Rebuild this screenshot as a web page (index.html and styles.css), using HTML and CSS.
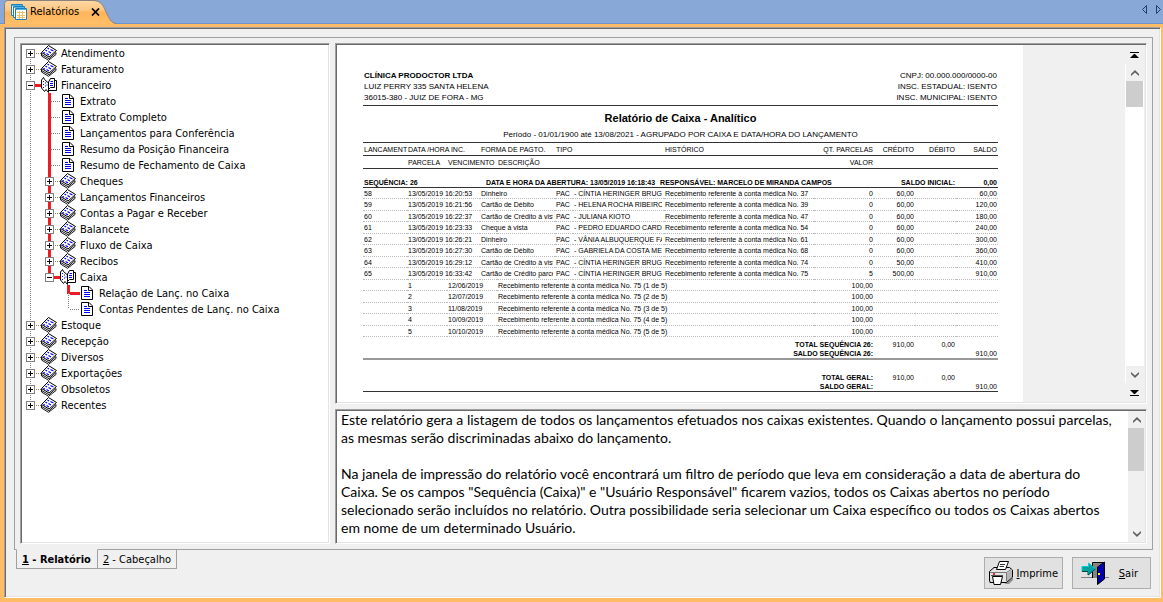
FILE: index.html
```html
<!DOCTYPE html>
<html lang="pt-BR">
<head>
<meta charset="utf-8">
<title>Relatórios</title>
<link rel="stylesheet" href="styles.css">
</head>
<body>
<svg class="defs" aria-hidden="true">
  <symbol id="i-book" viewBox="0 0 16 16">
    <path d="M0.500 8 7.500 0.500 15.500 5.500 14.500 10 7.500 15.500 0.500 11Z" fill="#fff"/>
    <path d="M0.500 7.500 7.500 0.500 15.500 5.500 8 12Z" fill="#fff" stroke="#000"/>
    <path d="M0.500 8V11L7.500 15.300 15 9.500V7.500L8 13.700 0.500 9.500" fill="none" stroke="#000" stroke-width=".9"/>
    <path d="M6.500 3 8 4M9.500 4.500 12.500 6M4.500 5 6 6M7.500 6.500 10 8M2.500 7.200 4 8.200M5.500 8.500 8 10" stroke="#00f" fill="none" stroke-width="1.200"/>
  </symbol>
  <symbol id="i-open" viewBox="0 0 16 16">
    <path d="M0.500 11V3L2.500 0.500 3.500 2.500 7.500 6V15.500L5 12.500 3.500 14.500Z" fill="#fff" stroke="#000"/>
    <path d="M7.500 5 9.500 1.500H13.500V10.500H9.500L7.500 12.500Z" fill="#fff" stroke="#000"/>
    <path d="M13.500 3.500H15.500V13.500H7.500" fill="none" stroke="#000"/>
    <path d="M2.500 4V5M4.500 5.500V6.500M2.500 7V8M4.500 8.500V9.500M6 7.500V8.500M2.500 10V11M9.500 4.500H12M9 6.500H12M9 8.500H12" stroke="#00f" fill="none"/>
  </symbol>
  <symbol id="i-page" viewBox="0 0 12 14">
    <path d="M0.500 0.500H8L11.500 4V13.500H0.500Z" fill="#fff" stroke="#000"/>
    <path d="M7.500 1V4.500H11" fill="none" stroke="#000"/>
    <path d="M3 4.500H6M3 6.500H9M3 8.500H9M3 10.500H9" stroke="#00f"/>
  </symbol>
  <symbol id="i-up" viewBox="0 0 8 6"><path d="M0 6V4L4 0 8 4V6L4 2.500Z" fill="#606060"/></symbol>
  <symbol id="i-down" viewBox="0 0 8 6"><path d="M0 0V2L4 6 8 2V0L4 3.500Z" fill="#606060"/></symbol>
</svg>

<header class="strip">
  <button class="doc-tab" type="button">
    <svg class="doc-shape" viewBox="0 0 112 24" width="112" height="24" aria-hidden="true">
      <defs><linearGradient id="g" x1="0" y1="0" x2="0" y2="1"><stop offset="0" stop-color="#ffd6a4"/><stop offset=".4" stop-color="#ffc681"/><stop offset=".5" stop-color="#ffb45a"/><stop offset="1" stop-color="#ffbf6b"/></linearGradient></defs>
      <path d="M0 24V5Q0 1 4 1H90C97 1 99 5 102 12 105 18 107 23 112 24Z" fill="url(#g)"/>
      <path d="M0.500 24V5Q0.500 0.500 4 0.500H90C97 1 99 5 102 12 105 18 107 23 112 23.500" fill="none" stroke="#8d8279"/>
    </svg>
    <svg class="doc-icon" width="16" height="16" viewBox="0 0 16 16" aria-hidden="true">
      <path d="M0.500 0.500H11.500V11.500H0.500Z" fill="#fff" stroke="#1b7fc0"/><path d="M1 1.500H11" stroke="#4fb4e8"/>
      <path d="M2.500 2.500H13.500V13.500H2.500Z" fill="#fff" stroke="#1b7fc0"/><path d="M3 3.500H13" stroke="#4fb4e8"/>
      <path d="M4.500 4.500H15.500V15.500H4.500Z" fill="#fff" stroke="#1b7fc0"/><path d="M5 5.500H15" stroke="#4fb4e8"/>
      <path d="M6 8.500H14M6 11.500H14M6 13.500H14" stroke="#e8c468"/><path d="M8.500 7V15M11.500 7V15" stroke="#e8c468"/>
    </svg>
    <span class="doc-name">Relatórios</span>
    <svg class="doc-close" width="9" height="8" viewBox="0 0 9 8" aria-hidden="true"><path d="M1 0.500 8 7.500M8 0.500 1 7.500" stroke="#000" stroke-width="1.700"/></svg>
  </button>
  <nav class="strip-nav">
    <button type="button" aria-label="Aba anterior"><svg width="5" height="9" viewBox="0 0 5 9"><path d="M4.500 0.500V8.500L0.500 4.500Z" fill="none" stroke="#1d3f6e"/></svg></button>
    <button type="button" aria-label="Próxima aba"><svg width="5" height="9" viewBox="0 0 5 9"><path d="M0.500 0.500V8.500L4.500 4.500Z" fill="none" stroke="#1d3f6e"/></svg></button>
  </nav>
</header>

<div class="window">
<main class="client">
  <section class="group">
    <div class="tree sunken">
      <ul>
        <li><div class="row"><button class="exp" type="button" aria-label="Expandir"></button><svg class="book"><use href="#i-book"/></svg><span>Atendimento</span></div></li>
        <li><div class="row"><button class="exp" type="button" aria-label="Expandir"></button><svg class="book"><use href="#i-book"/></svg><span>Faturamento</span></div></li>
        <li><div class="row hot"><button class="exp open" type="button" aria-label="Recolher"></button><svg class="book"><use href="#i-open"/></svg><span>Financeiro</span></div>
          <ul class="trail">
            <li><div class="row leaf"><svg class="page"><use href="#i-page"/></svg><span>Extrato</span></div></li>
            <li><div class="row leaf"><svg class="page"><use href="#i-page"/></svg><span>Extrato Completo</span></div></li>
            <li><div class="row leaf"><svg class="page"><use href="#i-page"/></svg><span>Lançamentos para Conferência</span></div></li>
            <li><div class="row leaf"><svg class="page"><use href="#i-page"/></svg><span>Resumo da Posição Financeira</span></div></li>
            <li><div class="row leaf"><svg class="page"><use href="#i-page"/></svg><span>Resumo de Fechamento de Caixa</span></div></li>
            <li><div class="row"><button class="exp" type="button" aria-label="Expandir"></button><svg class="book"><use href="#i-book"/></svg><span>Cheques</span></div></li>
            <li><div class="row"><button class="exp" type="button" aria-label="Expandir"></button><svg class="book"><use href="#i-book"/></svg><span>Lançamentos Financeiros</span></div></li>
            <li><div class="row"><button class="exp" type="button" aria-label="Expandir"></button><svg class="book"><use href="#i-book"/></svg><span>Contas a Pagar e Receber</span></div></li>
            <li><div class="row"><button class="exp" type="button" aria-label="Expandir"></button><svg class="book"><use href="#i-book"/></svg><span>Balancete</span></div></li>
            <li><div class="row"><button class="exp" type="button" aria-label="Expandir"></button><svg class="book"><use href="#i-book"/></svg><span>Fluxo de Caixa</span></div></li>
            <li><div class="row"><button class="exp" type="button" aria-label="Expandir"></button><svg class="book"><use href="#i-book"/></svg><span>Recibos</span></div></li>
            <li><div class="row hot"><button class="exp open" type="button" aria-label="Recolher"></button><svg class="book"><use href="#i-open"/></svg><span>Caixa</span></div>
              <ul>
                <li class="goal"><div class="row leaf hot"><svg class="page"><use href="#i-page"/></svg><span>Relação de Lanç. no Caixa</span></div></li>
                <li><div class="row leaf"><svg class="page"><use href="#i-page"/></svg><span>Contas Pendentes de Lanç. no Caixa</span></div></li>
              </ul>
            </li>
          </ul>
        </li>
        <li><div class="row"><button class="exp" type="button" aria-label="Expandir"></button><svg class="book"><use href="#i-book"/></svg><span>Estoque</span></div></li>
        <li><div class="row"><button class="exp" type="button" aria-label="Expandir"></button><svg class="book"><use href="#i-book"/></svg><span>Recepção</span></div></li>
        <li><div class="row"><button class="exp" type="button" aria-label="Expandir"></button><svg class="book"><use href="#i-book"/></svg><span>Diversos</span></div></li>
        <li><div class="row"><button class="exp" type="button" aria-label="Expandir"></button><svg class="book"><use href="#i-book"/></svg><span>Exportações</span></div></li>
        <li><div class="row"><button class="exp" type="button" aria-label="Expandir"></button><svg class="book"><use href="#i-book"/></svg><span>Obsoletos</span></div></li>
        <li><div class="row"><button class="exp" type="button" aria-label="Expandir"></button><svg class="book"><use href="#i-book"/></svg><span>Recentes</span></div></li>
      </ul>
    </div>

    <div class="preview sunken">
      <article class="sheet">
        <header class="sheet-head">
          <address><b>CLÍNICA PRODOCTOR LTDA</b><br>LUIZ PERRY 335 SANTA HELENA<br>36015-380 - JUIZ DE FORA - MG</address>
          <p>CNPJ: 00.000.000/0000-00<br>INSC. ESTADUAL: ISENTO<br>INSC. MUNICIPAL: ISENTO</p>
        </header>
        <h1>Relatório de Caixa - Analítico</h1>
        <p class="period">Período - 01/01/1900 até 13/08/2021 - AGRUPADO POR CAIXA E DATA/HORA DO LANÇAMENTO</p>
        <table>
          <colgroup><col class="c1"><col class="c2"><col class="c3"><col class="c4"><col class="c5"><col class="c6"><col class="c7"><col class="c8"><col class="c9"><col class="c10"><col class="c11"><col class="c12"></colgroup>
          <thead>
            <tr><th>LANCAMENT</th><th colspan="2">DATA /HORA INC.</th><th colspan="2">FORMA DE PAGTO.</th><th colspan="2">TIPO</th><th>HISTÓRICO</th><th class="n">QT. PARCELAS</th><th class="n">CRÉDITO</th><th class="n">DÉBITO</th><th class="n">SALDO</th></tr>
            <tr><th></th><th>PARCELA</th><th colspan="2">VENCIMENTO</th><th colspan="4">DESCRIÇÃO</th><th class="n">VALOR</th><th colspan="3"></th></tr>
          </thead>
          <tbody class="entries">
            <tr class="seq"><th colspan="3">SEQUÊNCIA: 26</th><th colspan="6" class="open-at"><span>DATA E HORA DA ABERTURA: 13/05/2019 16:18:43</span><span>RESPONSÁVEL: MARCELO DE MIRANDA CAMPOS</span></th><th colspan="2" class="n">SALDO INICIAL:</th><th class="n">0,00</th></tr>
            <tr><td>58</td><td colspan="2">13/05/2019 16:20:53</td><td colspan="2"><span>Dinheiro</span></td><td>PAC</td><td><span>- CÍNTIA HERINGER BRUG</span></td><td>Recebimento referente à conta médica No. 37</td><td class="n">0</td><td class="n">60,00</td><td></td><td class="n">60,00</td></tr>
            <tr><td>59</td><td colspan="2">13/05/2019 16:21:56</td><td colspan="2"><span>Cartão de Débito</span></td><td>PAC</td><td><span>- HELENA ROCHA RIBEIRO</span></td><td>Recebimento referente à conta médica No. 39</td><td class="n">0</td><td class="n">60,00</td><td></td><td class="n">120,00</td></tr>
            <tr><td>60</td><td colspan="2">13/05/2019 16:22:37</td><td colspan="2"><span>Cartão de Crédito à vista</span></td><td>PAC</td><td><span>- JULIANA KIOTO</span></td><td>Recebimento referente à conta médica No. 47</td><td class="n">0</td><td class="n">60,00</td><td></td><td class="n">180,00</td></tr>
            <tr><td>61</td><td colspan="2">13/05/2019 16:23:33</td><td colspan="2"><span>Cheque à vista</span></td><td>PAC</td><td><span>- PEDRO EDUARDO CARDO</span></td><td>Recebimento referente à conta médica No. 54</td><td class="n">0</td><td class="n">60,00</td><td></td><td class="n">240,00</td></tr>
            <tr><td>62</td><td colspan="2">13/05/2019 16:26:21</td><td colspan="2"><span>Dinheiro</span></td><td>PAC</td><td><span>- VÂNIA ALBUQUERQUE FA</span></td><td>Recebimento referente à conta médica No. 61</td><td class="n">0</td><td class="n">60,00</td><td></td><td class="n">300,00</td></tr>
            <tr><td>63</td><td colspan="2">13/05/2019 16:27:30</td><td colspan="2"><span>Cartão de Débito</span></td><td>PAC</td><td><span>- GABRIELA DA COSTA ME</span></td><td>Recebimento referente à conta médica No. 68</td><td class="n">0</td><td class="n">60,00</td><td></td><td class="n">360,00</td></tr>
            <tr><td>64</td><td colspan="2">13/05/2019 16:29:12</td><td colspan="2"><span>Cartão de Crédito à vista</span></td><td>PAC</td><td><span>- CÍNTIA HERINGER BRUG</span></td><td>Recebimento referente à conta médica No. 74</td><td class="n">0</td><td class="n">50,00</td><td></td><td class="n">410,00</td></tr>
            <tr><td>65</td><td colspan="2">13/05/2019 16:33:42</td><td colspan="2"><span>Cartão de Crédito parce</span></td><td>PAC</td><td><span>- CÍNTIA HERINGER BRUG</span></td><td>Recebimento referente à conta médica No. 75</td><td class="n">5</td><td class="n">500,00</td><td></td><td class="n">910,00</td></tr>
            <tr><td></td><td>1</td><td colspan="2">12/06/2019</td><td colspan="4">Recebimento referente à conta médica No. 75 (1 de 5)</td><td class="n">100,00</td><td colspan="3"></td></tr>
            <tr><td></td><td>2</td><td colspan="2">12/07/2019</td><td colspan="4">Recebimento referente à conta médica No. 75 (2 de 5)</td><td class="n">100,00</td><td colspan="3"></td></tr>
            <tr><td></td><td>3</td><td colspan="2">11/08/2019</td><td colspan="4">Recebimento referente à conta médica No. 75 (3 de 5)</td><td class="n">100,00</td><td colspan="3"></td></tr>
            <tr><td></td><td>4</td><td colspan="2">10/09/2019</td><td colspan="4">Recebimento referente à conta médica No. 75 (4 de 5)</td><td class="n">100,00</td><td colspan="3"></td></tr>
            <tr><td></td><td>5</td><td colspan="2">10/10/2019</td><td colspan="4">Recebimento referente à conta médica No. 75 (5 de 5)</td><td class="n">100,00</td><td colspan="3"></td></tr>
          </tbody>
          <tbody class="total">
            <tr><th colspan="9" class="n">TOTAL SEQUÊNCIA 26:</th><td class="n">910,00</td><td class="n">0,00</td><td></td></tr>
            <tr><th colspan="9" class="n">SALDO SEQUÊNCIA 26:</th><td></td><td></td><td class="n">910,00</td></tr>
          </tbody>
          <tbody class="total grand">
            <tr><th colspan="9" class="n">TOTAL GERAL:</th><td class="n">910,00</td><td class="n">0,00</td><td></td></tr>
            <tr><th colspan="9" class="n">SALDO GERAL:</th><td></td><td></td><td class="n">910,00</td></tr>
          </tbody>
        </table>
      </article>
      <div class="pager">
        <button class="jump" type="button" aria-label="Primeira página"><svg width="9" height="6" viewBox="0 0 9 6"><path d="M0 0H9V1H0ZM4 2H5L9 6H0Z"/></svg></button>
        <div class="scroll light">
          <button type="button" aria-label="Rolar para cima"><svg width="8" height="6"><use href="#i-up"/></svg></button>
          <div class="track"><div class="thumb short"></div></div>
          <button type="button" aria-label="Rolar para baixo"><svg width="8" height="6"><use href="#i-down"/></svg></button>
        </div>
        <button class="jump" type="button" aria-label="Última página"><svg width="9" height="6" viewBox="0 0 9 6"><path d="M0 5H9V6H0ZM4 4H5L9 0H0Z"/></svg></button>
      </div>
    </div>

    <div class="memo sunken">
      <textarea readonly aria-label="Descrição do relatório">Este relatório gera a listagem de todos os lançamentos efetuados nos caixas existentes. Quando o lançamento possui parcelas, as mesmas serão discriminadas abaixo do lançamento.

Na janela de impressão do relatório você encontrará um filtro de período que leva em consideração a data de abertura do Caixa. Se os campos "Sequência (Caixa)" e "Usuário Responsável" ficarem vazios, todos os Caixas abertos no período selecionado serão incluídos no relatório. Outra possibilidade seria selecionar um Caixa específico ou todos os Caixas abertos em nome de um determinado Usuário.</textarea>
      <div class="scroll">
        <button type="button" aria-label="Rolar para cima"><svg width="8" height="6"><use href="#i-up"/></svg></button>
        <div class="track"><div class="thumb"></div></div>
        <button type="button" aria-label="Rolar para baixo"><svg width="8" height="6"><use href="#i-down"/></svg></button>
      </div>
    </div>
  </section>

  <footer class="foot">
    <div class="tabs" role="tablist">
      <button type="button" role="tab" aria-selected="true" class="on"><span><u>1</u> - Relatório</span></button>
      <button type="button" role="tab" aria-selected="false"><span><u>2</u> - Cabeçalho</span></button>
    </div>
    <div class="actions">
      <button type="button">
        <svg width="25" height="24" viewBox="0 0 25 24" aria-hidden="true">
          <path d="M17 22 24 15V19L20 23H15Z" fill="#909090"/>
          <path d="M0.500 10.500 5 6.500H20.500L23.500 9V16L17.500 21.500H1L0.500 19Z" fill="#e4e4e4" stroke="#000"/>
          <path d="M1 11.500H17.500V20.500" fill="none" stroke="#777"/><path d="M17.500 11.500 23 8" stroke="#777"/>
          <path d="M18 12 23 9V16L18 20.500Z" fill="#b5b5b5"/>
          <path d="M7.500 8.500 10.500 0.500H19.500L16.500 8.500Z" fill="#fff" stroke="#000"/>
          <path d="M11 3.500H16M10.500 5.500H15" stroke="#333"/>
          <path d="M2 14H14V15H2Z" fill="#555"/>
          <path d="M3.500 15.500H13.500L11.500 23.500H5Z" fill="#fff" stroke="#000"/>
          <path d="M4 13H6" stroke="#f22" stroke-width="2"/>
        </svg>
        <span><u>I</u>mprime</span>
      </button>
      <button type="button">
        <svg width="28" height="24" viewBox="0 0 28 24" aria-hidden="true">
          <path d="M0 16.500H11M23 16.500H28" stroke="#808080"/>
          <path d="M11.500 17V1.500H22.500V17" fill="#858585" stroke="#000"/>
          <path d="M16.500 6 23.500 1V18L16.500 23.500Z" fill="#0000a8" stroke="#000"/>
          <path d="M18 12V14" stroke="#ff0" stroke-width="2"/>
          <path d="M1 5.500H7.500V2L14.500 8 7.500 14V10.500H1Z" fill="#00a0a0" stroke="#00d0d0"/>
          <path d="M1 10.500H7V14L14.500 8" fill="none" stroke="#004848"/>
        </svg>
        <span><u>S</u>air</span>
      </button>
    </div>
  </footer>
</main>
</div>
</body>
</html>
```
FILE: styles.css
```css
* { box-sizing: border-box; }

body {
  margin: 0;
  min-height: 100vh;
  display: flex;
  flex-direction: column;
  background: #88a9d8;
  color: #000;
  font: 11px/16px "DejaVu Sans Condensed", "DejaVu Sans", sans-serif;
}

button {
  margin: 0;
  padding: 0;
  border: 0;
  background: none;
  color: inherit;
  font: inherit;
}

svg { display: block; flex: none; }
.defs { position: absolute; width: 0; height: 0; }

/* document tab strip */
.strip {
  height: 24px;
  display: flex;
  justify-content: space-between;
  padding: 0 2px 0 4px;
  border-bottom: 1px solid #6f94cc;
}
.doc-tab {
  position: relative;
  height: 24px;
  width: 112px;
  display: flex;
  align-items: center;
  padding-left: 7px;
}
.doc-shape { position: absolute; left: 0; top: 0; }
.doc-icon, .doc-name, .doc-close { position: relative; }
.doc-name { margin: 0 12px 0 3px; }
.strip-nav { display: flex; gap: 9px; height: 19px; align-items: center; }

/* window frame */
.window {
  flex: 1;
  display: flex;
  padding: 3px 2px 4px 4px;
  background: #ffbb66;
}
.client {
  flex: 1;
  min-width: 0;
  display: flex;
  flex-direction: column;
  background: #f0f0f0;
}
.client, .sunken {
  border: 1px solid;
  border-color: #a0a0a0 #fff #fff #a0a0a0;
  box-shadow: inset 1px 1px #696969, inset -1px -1px #e3e3e3;
}
.client { padding: 9px 7px 8px 9px; }
.group {
  flex: 1;
  display: grid;
  grid-template-columns: 310px 1fr;
  grid-template-rows: 1fr 135px;
  gap: 5px;
  padding: 5px;
  border: 1px solid #a0a0a0;
}
.sunken { padding: 1px; min-width: 0; }

/* report tree */
.tree { grid-row: span 2; background: #fff; }
.tree ul { margin: 0; padding: 0; list-style: none; }
.tree ul ul { padding-left: 19px; }
.tree li { position: relative; }
.tree li::before {
  content: "";
  position: absolute;
  left: 8px;
  top: 0;
  bottom: 0;
  width: 1px;
  background: repeating-linear-gradient(#808080 0 1px, #fff 1px 2px);
}
.tree > ul > li:first-child::before { top: 8px; }
.tree li:last-child::before { bottom: auto; height: 8px; }
.tree .trail > li::before, .tree .goal::before {
  left: 7px;
  width: 3px;
  background: #ed1c24;
}
.tree .goal::before { bottom: auto; height: 9px; }
.tree .goal + li::before { top: -8px; height: 16px; }
.row {
  position: relative;
  height: 16px;
  display: flex;
  align-items: center;
  padding-left: 4px;
  white-space: nowrap;
}
.row span, .tabs span, .actions span { padding-top: 2px; }
.row::before {
  content: "";
  position: absolute;
  left: 10px;
  width: 10px;
  height: 1px;
  background: repeating-linear-gradient(90deg, #808080 0 1px, #fff 1px 2px);
}
.row.hot::before { height: 3px; background: #ed1c24; }
.exp {
  position: relative;
  width: 9px;
  height: 9px;
  border: 1px solid #808080;
  background: linear-gradient(#000, #000) 1px 3px / 5px 1px no-repeat,
              linear-gradient(#000, #000) 3px 1px / 1px 5px no-repeat, #fff;
}
.exp.open { background: linear-gradient(#000, #000) 1px 3px / 5px 1px no-repeat, #fff; }
.book { position: relative; width: 16px; height: 16px; margin: 0 4px 0 6px; }
.page { position: relative; width: 12px; height: 14px; margin: 0 6px 0 17px; }

/* report preview */
.preview { display: flex; justify-content: space-between; }
.sheet {
  width: 686px;
  padding: 25px 25px 0 26px;
  background: #fff;
  font: 8px/11px "Liberation Sans", Arial, sans-serif;
}
.sheet-head {
  display: flex;
  justify-content: space-between;
  padding: 0 1px 2px;
  border-bottom: 1px solid #333;
}
.sheet address, .sheet p { margin: 0; font-style: normal; }
.sheet-head p { text-align: right; }
.sheet h1 { margin: 6px 0 5px; font-size: 11px; line-height: 12px; text-align: center; }
.sheet .period { margin-bottom: 2px; text-align: center; }
.sheet table {
  width: 100%;
  table-layout: fixed;
  border-collapse: collapse;
  font-size: 7px;
  line-height: 9px;
}
.c1 { width: 44px; } .c2 { width: 40px; } .c3 { width: 33px; } .c4 { width: 17px; }
.c5 { width: 58px; } .c6 { width: 18px; } .c7 { width: 91px; } .c8 { width: 150px; }
.c9 { width: 60px; } .c10, .c11 { width: 41px; } .c12 { width: 42px; }
.sheet th, .sheet td {
  padding: 0 1px;
  overflow: hidden;
  white-space: nowrap;
  text-align: left;
}
.sheet td span { display: block; margin-right: 1px; overflow: hidden; }
.sheet .n { text-align: right; }
.sheet thead th { font-weight: normal; border-top: 1px solid #333; border-bottom: 1px solid #333; height: 13px; }
.entries tr { height: 12px; border-bottom: 1px dotted #bbb; }
.entries tr:nth-child(even) { height: 11px; }
.entries .seq { height: 19px; border-bottom: 1px solid #333; }
.entries .seq th { vertical-align: bottom; }
.open-at span { margin-left: 5px; }
.total tr:first-child { height: 12px; }
.total th, .total td { vertical-align: bottom; }
.total tr:last-child { border-bottom: 2px solid #999; }
.total tr:last-child > * { height: 10px; }
.grand tr:first-child { height: 23px; }
.grand tr:last-child { border-bottom: 1px solid #333; }

/* scroll bars */
.pager { width: 20px; padding-right: 1px; display: flex; flex-direction: column; }
.jump { height: 19px; display: flex; align-items: center; justify-content: center; }
.scroll { width: 17px; display: flex; flex-direction: column; background: #f0f0f0; }
.scroll button { height: 17px; display: flex; align-items: center; justify-content: center; background: #f0f0f0; }
.track { flex: 1; padding-right: 1px; }
.thumb { height: 43px; background: #cdcdcd; }
.pager .scroll { flex: 1; width: 100%; border-left: 1px solid #fff; }
.light .track { background: #fff; }
.thumb.short { height: 26px; }

/* description */
.memo { display: flex; background: #fff; }
.memo textarea {
  flex: 1;
  min-width: 0;
  padding: 0 12px 0 4px;
  border: 0;
  outline: 0;
  resize: none;
  overflow: hidden;
  background: none;
  color: #000;
  font: 14px/18px Lato, "Open Sans", sans-serif;
}

/* bottom tabs and buttons */
.foot { display: flex; justify-content: space-between; align-items: flex-start; }
.tabs { display: flex; margin: -1px 0 0 2px; }
.tabs button {
  height: 20px;
  display: flex;
  align-items: center;
  padding: 0 5px;
  border: 1px solid #a0a0a0;
  border-left: 0;
  background: #f0f0f0;
}
.tabs .on { padding: 0 6px 0 5px; border-left: 1px solid #a0a0a0; border-top-color: #f0f0f0; font-weight: bold; }
.actions { display: flex; gap: 9px; padding-top: 7px; padding-right: 2px; }
.actions button {
  width: 79px;
  height: 32px;
  display: flex;
  align-items: center;
  justify-content: space-between;
  padding: 0 4px;
  border: 1px solid #adadad;
  background: #e1e1e1;
}
.actions button:last-child { padding: 0 12px 0 8px; }
```
